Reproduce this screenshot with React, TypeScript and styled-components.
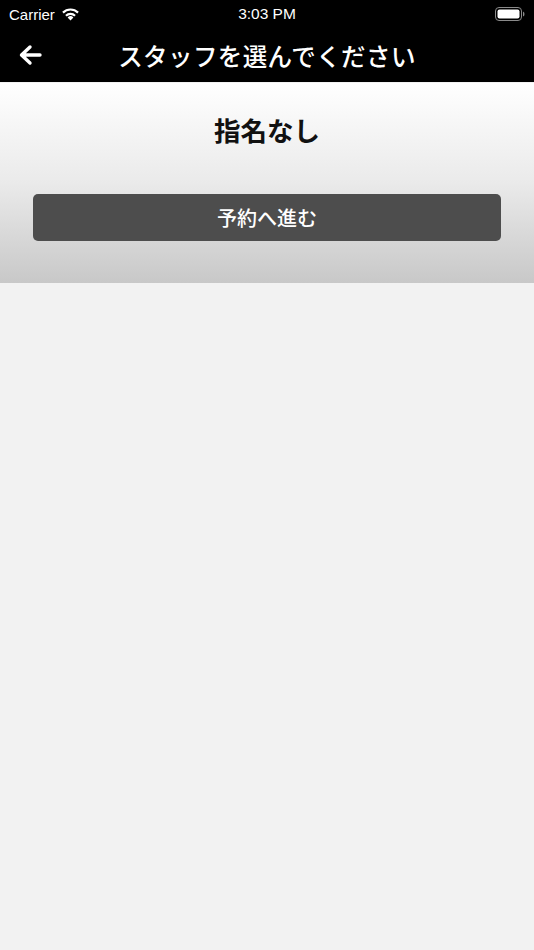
import React from "react";
import styled, { createGlobalStyle } from "styled-components";

const GlobalStyle = createGlobalStyle`
  html, body {
    margin: 0;
    padding: 0;
    background: #f2f2f2;
    font-family: "Noto Sans CJK JP", "Noto Sans", sans-serif;
  }
`;

const Screen = styled.div`
  width: 534px;
  min-height: 950px;
  background: #f2f2f2;
  display: flex;
  flex-direction: column;
`;

const Header = styled.header`
  background: #000;
  color: #fff;
`;

const StatusBar = styled.div`
  height: 28px;
  display: grid;
  grid-template-columns: 1fr auto 1fr;
  align-items: center;
  padding: 0 9px;
  font-family: "Liberation Sans", Arial, sans-serif;
  font-size: 15px;
`;

const StatusLeft = styled.div`
  display: flex;
  align-items: center;
  gap: 6px;
`;

const StatusTime = styled.div`
  font-weight: 400;
  font-size: 15.5px;
`;

const StatusRight = styled.div`
  display: flex;
  justify-content: flex-end;
`;

const NavBar = styled.div`
  height: 54px;
  display: grid;
  grid-template-columns: 60px 1fr 60px;
  align-items: center;
`;

const BackButton = styled.button`
  background: none;
  border: none;
  padding: 0 0 0 18px;
  display: flex;
  align-items: center;
  cursor: pointer;
`;

const NavTitle = styled.h1`
  margin: 0;
  text-align: center;
  font-size: 24.5px;
  font-weight: 500;
  letter-spacing: 0.4px;
`;

const Card = styled.section`
  height: 200px;
  margin-top: 1px;
  background: linear-gradient(to bottom, #ffffff 0%, #eaeaea 50%, #c8c8c8 100%);
  display: flex;
  flex-direction: column;
  align-items: center;
  padding: 0 33px 0 33px;
  box-sizing: border-box;
`;

const StaffName = styled.h2`
  margin: 27px 0 0;
  font-size: 26.5px;
  font-weight: 700;
  color: #111;
  line-height: 40px;
`;

const ReserveButton = styled.button`
  margin-top: 44px;
  width: 100%;
  height: 47px;
  background: #4d4d4d;
  color: #fff;
  border: none;
  border-radius: 5px;
  font-family: "Noto Sans CJK JP", "Noto Sans", sans-serif;
  font-size: 20px;
  font-weight: 500;
  cursor: pointer;
`;

const Wifi = () => (
  <svg width="19" height="14" viewBox="0 0 19 14">
    <path d="M9.5 13.5 L6.6 10.4 A4.2 4.2 0 0 1 12.4 10.4 Z" fill="#fff" />
    <path d="M4.2 7.9 A7.6 7.6 0 0 1 14.8 7.9 L13.3 9.5 A5.4 5.4 0 0 0 5.7 9.5 Z" fill="#fff" />
    <path d="M1.2 4.8 A11.8 11.8 0 0 1 17.8 4.8 L16.3 6.4 A9.6 9.6 0 0 0 2.7 6.4 Z" fill="#fff" />
  </svg>
);

const Battery = () => (
  <svg width="30" height="14" viewBox="0 0 30 14">
    <rect x="0.5" y="0.5" width="26" height="13" rx="3.5" fill="none" stroke="#8a8a8a" strokeWidth="1" />
    <rect x="2.5" y="2.5" width="22" height="9" rx="2" fill="#fff" />
    <path d="M28 4.5 Q29.5 5 29.5 7 Q29.5 9 28 9.5 Z" fill="#8a8a8a" />
  </svg>
);

const BackArrow = () => (
  <svg width="24" height="22" viewBox="0 0 24 22">
    <path d="M22 11 H4 M12 3 L3.5 11 L12 19" fill="none" stroke="#fff" strokeWidth="3.4" strokeLinecap="round" strokeLinejoin="round" />
  </svg>
);

export default function App() {
  return (
    <>
      <GlobalStyle />
      <Screen>
        <Header>
          <StatusBar>
            <StatusLeft>
              <span>Carrier</span>
              <Wifi />
            </StatusLeft>
            <StatusTime>3:03 PM</StatusTime>
            <StatusRight>
              <Battery />
            </StatusRight>
          </StatusBar>
          <NavBar>
            <BackButton aria-label="戻る">
              <BackArrow />
            </BackButton>
            <NavTitle>スタッフを選んでください</NavTitle>
            <span />
          </NavBar>
        </Header>
        <Card>
          <StaffName>指名なし</StaffName>
          <ReserveButton>予約へ進む</ReserveButton>
        </Card>
      </Screen>
    </>
  );
}
